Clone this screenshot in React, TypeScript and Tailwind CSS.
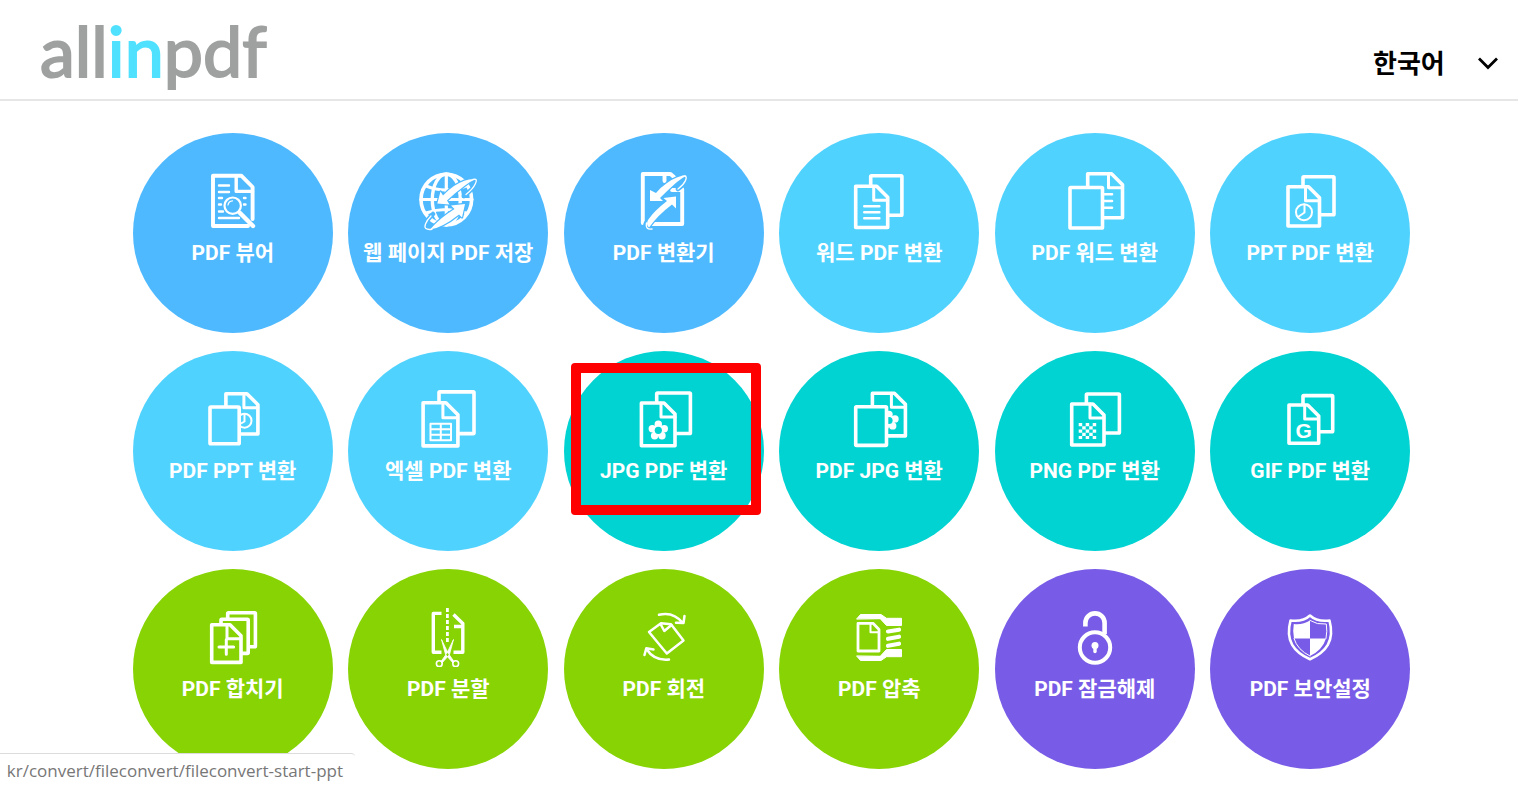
import type { ReactNode } from 'react';

type Box = { x: number; y: number; w: number; h: number };

// sheet of paper with a folded top right corner
function Sheet({ x, y, w, h, fold = 14, bg }: Box & { fold?: number; bg?: string }) {
  const r = x + w;
  const b = y + h;
  return (
    <>
      <path d={`M${r - fold + 3} ${y}H${x}V${b}H${r}V${y + fold - 3}Z`} className={bg} />
      <path d={`M${r - fold} ${y}V${y + fold}H${r}`} fill="none" strokeWidth="3" />
    </>
  );
}

function Page({ x, y, w, h, bg }: Box & { bg?: string }) {
  return <rect x={x} y={y} width={w} height={h} rx="0.8" className={bg} />;
}

function Flower({ x, y }: { x: number; y: number }) {
  return (
    <g stroke="none" fill="#fff">
      <path d={`M${x} ${y - 7}L${x + 6.8} ${y - 2}L${x + 4.2} ${y + 6}H${x - 4.2}L${x - 6.8} ${y - 2}Z`} />
      <circle cx={x} cy={y - 6} r="3.7" />
      <circle cx={x + 6} cy={y - 1.6} r="3.7" />
      <circle cx={x + 3.7} cy={y + 5.4} r="3.7" />
      <circle cx={x - 3.7} cy={y + 5.4} r="3.7" />
      <circle cx={x - 6} cy={y - 1.6} r="3.7" />
      <circle cx={x} cy={y} r="3.6" className="fill-[#00d3d2]" />
    </g>
  );
}

const blue = 'fill-[#4eb9ff]';
const sky = 'fill-[#50d2ff]';
const teal = 'fill-[#00d3d2]';
const green = 'fill-[#87d304]';

const tools: { label: string; color: string; icon: ReactNode; marked?: boolean }[] = [
  {
    label: 'PDF 뷰어',
    color: 'bg-[#4eb9ff]',
    icon: (
      <>
        <path d="M47 59H12V8.800H40.500L51.600 20V52" fill="none" strokeWidth="3.900" />
        <path d="M35.200 9V24.400H51.500" fill="none" strokeWidth="3.400" />
        <path d="M18 18.500h10M18 25h10M18 31h3M18 37.500h2M18 44.500h4M18 51h20M43 31h1.500M43 37.500h1.500" strokeWidth="2.400" fill="none" />
        <circle cx="31.700" cy="38.700" r="8.200" strokeWidth="2.200" className={blue} />
        <path d="M27 38a5 5 0 0 1 4.500-4.200" strokeWidth="1.200" fill="none" />
        <path d="M38.500 45.500L52 59" strokeWidth="4.400" fill="none" />
      </>
    ),
  },
  {
    label: '웹 페이지 PDF 저장',
    color: 'bg-[#4eb9ff]',
    icon: (
      <>
        <g fill="none">
          <circle cx="30.300" cy="32.500" r="25.300" strokeWidth="3.600" />
          <ellipse cx="30.300" cy="32.500" rx="14" ry="25.500" strokeWidth="3.400" />
          <path d="M30.300 7V58M5 32.500H56M10 19Q30 27 50 19M10 46Q30 39 50 46" strokeWidth="3.200" />
        </g>
        <path d="M60 12Q62 16 56 22Q53 25 48 29M16 62Q7 63.500 9.500 57Q11 53 17 47" fill="none" strokeWidth="4.500" className="stroke-[#4eb9ff]" />
        <g fill="#fff" className="stroke-[#4eb9ff]" strokeWidth="2.400" paintOrder="stroke">
          <path d="M60 12Q50 11 38 19Q32 23 27 28.500L24.500 24.500L21.300 36.500L33.500 37.500L31 33.500Q40 25 49 18.500Q55 14 60 12Z" />
          <path d="M14 62.500Q26 61 43 47.500L46 50.500L49 37L35 38.500L38.500 42Q24 51 14 62.500Z" />
        </g>
        <path d="M57 12.300Q62 11 59.500 16.500Q57 22 50 27.500M16 62.300Q7 63.500 9.500 57Q11 53 15 49" fill="none" strokeWidth="1.300" />
      </>
    ),
  },
  {
    label: 'PDF 변환기',
    color: 'bg-[#4eb9ff]',
    icon: (
      <>
        <path d="M10.800 56V7H38.500L42 10M50.200 22V57H20M32.500 8V14M40 23H50" fill="none" strokeWidth="3.900" />
        <path d="M54 9Q56 13 51 18L46 22M21 62Q11 63.500 14 56" fill="none" strokeWidth="4.500" className="stroke-[#4eb9ff]" />
        <g fill="#fff" className="stroke-[#4eb9ff]" strokeWidth="2.400" paintOrder="stroke">
          <path d="M54.500 8.500Q46 8 35 16Q29 20 24 26L18 23V34H31L28 31Q38 21 45 15Q50 11 54.500 8.500Z" />
          <path d="M17 60.500Q26 48 40 37.500L44 41.500V29.500L31.500 31L35 34Q22 44 16 53Q13.500 58 17 60.500Z" />
        </g>
        <path d="M50 9.300Q56 7.500 53.500 13.500Q51.500 18 46 22M20 62Q13 63 14.500 56" fill="none" strokeWidth="1.400" />
      </>
    ),
  },
  {
    label: '워드 PDF 변환',
    color: 'bg-[#50d2ff]',
    icon: (
      <>
        <Page x={23.700} y={8.700} w={31.200} h={39.500} />
        <Sheet x={8.700} y={19.200} w={32} h={41.300} bg={sky} />
        <path d="M17.300 39.200h15M17.300 45.200h15M17.300 51.200h15" strokeWidth="2.600" fill="none" />
      </>
    ),
  },
  {
    label: 'PDF 워드 변환',
    color: 'bg-[#50d2ff]',
    icon: (
      <>
        <Sheet x={24.700} y={6.700} w={34.800} h={44} bg={sky} />
        <path d="M41 27.300h8M41 34h8M41 40.800h8" strokeWidth="2.600" fill="none" />
        <Page x={7} y={20.500} w={32.500} h={40.500} bg={sky} />
      </>
    ),
  },
  {
    label: 'PPT PDF 변환',
    color: 'bg-[#50d2ff]',
    icon: (
      <>
        <Page x={25} y={9.700} w={31} h={38} />
        <Sheet x={10} y={19.700} w={31.500} h={39.300} bg={sky} />
        <circle cx="26" cy="45.200" r="8" strokeWidth="2" fill="none" />
        <path d="M26.500 37.500V45.500L20 50" strokeWidth="2" fill="none" />
      </>
    ),
  },
  {
    label: 'PDF PPT 변환',
    color: 'bg-[#50d2ff]',
    icon: (
      <>
        <Sheet x={24.900} y={8.700} w={32} h={40.300} bg={sky} />
        <circle cx="43.500" cy="35.700" r="7" strokeWidth="2" fill="none" />
        <path d="M43.500 29V36.500L39 39" strokeWidth="2" fill="none" />
        <Page x={9} y={22} w={29.200} h={36.700} bg={sky} />
      </>
    ),
  },
  {
    label: '엑셀 PDF 변환',
    color: 'bg-[#50d2ff]',
    icon: (
      <>
        <Page x={23} y={6.900} w={35} h={41.700} />
        <Sheet x={7.100} y={17.700} w={34.800} h={43.200} fold={15} bg={sky} />
        <path d="M14.500 38.800h20.500v16.500h-20.500zM14.500 44.300h20.500M14.500 49.800h20.500M24.800 38.800v16.500" strokeWidth="2" fill="none" />
      </>
    ),
  },
  {
    label: 'JPG PDF 변환',
    color: 'bg-[#00d3d2]',
    marked: true,
    icon: (
      <>
        <Page x={24.700} y={8} w={33.700} h={40.500} />
        <Sheet x={9.400} y={18} w={33.600} h={42.700} bg={teal} />
        <Flower x={26.300} y={45.300} />
      </>
    ),
  },
  {
    label: 'PDF JPG 변환',
    color: 'bg-[#00d3d2]',
    icon: (
      <>
        <Sheet x={25.400} y={8.200} w={33} h={42.700} bg={teal} />
        <Flower x={42} y={35.500} />
        <Page x={8.700} y={21.700} w={30.800} h={38.700} bg={teal} />
      </>
    ),
  },
  {
    label: 'PNG PDF 변환',
    color: 'bg-[#00d3d2]',
    icon: (
      <>
        <Page x={23.400} y={9} w={33} h={39} />
        <Sheet x={8.700} y={19} w={32.300} h={41} bg={teal} />
        <path
          d="M15.700 39.700H34M15.700 46.100H34M15.700 52.500H34M19.200 42.900H33M19.200 49.300H33"
          strokeWidth="3.200"
          strokeDasharray="3.500 3.500"
          strokeLinecap="butt"
          fill="none"
        />
      </>
    ),
  },
  {
    label: 'GIF PDF 변환',
    color: 'bg-[#00d3d2]',
    icon: (
      <>
        <Page x={25} y={10.600} w={29.700} h={36.200} />
        <Sheet x={11} y={20} w={29.700} h={38.200} bg={teal} />
        <text x="25.700" y="52.500" textAnchor="middle" stroke="none" fill="#fff" className="font-['Liberation_Sans',sans-serif] text-[21px] font-bold">G</text>
      </>
    ),
  },
  {
    label: 'PDF 합치기',
    color: 'bg-[#87d304]',
    icon: (
      <>
        <Page x={26.700} y={9.700} w={27.700} h={34} />
        <Page x={20} y={16.200} w={27.200} h={34.200} bg={green} />
        <Sheet x={10.700} y={21.700} w={29.300} h={37.700} bg={green} />
        <path d="M25.300 36.700v14.600M18 44h14.600" fill="none" strokeWidth="3" />
      </>
    ),
  },
  {
    label: 'PDF 분할',
    color: 'bg-[#87d304]',
    icon: (
      <g fill="none" strokeLinecap="butt">
        <path d="M25.500 10.400H17.300V49.300H25.500" strokeWidth="3.400" />
        <path d="M37.500 11.500L46.800 20.500V49.300H37.500M38 23.500H46.500" strokeWidth="3.400" />
        <path d="M31.400 5V41" strokeWidth="2.800" strokeDasharray="4 2" />
        <circle cx="23.300" cy="60.700" r="2.900" strokeWidth="1.600" />
        <circle cx="39.700" cy="60.700" r="2.900" strokeWidth="1.600" />
        <path d="M25.500 36.500L32 50L38 58.500L37 60L29.500 51.500ZM37.500 36.500L31 50L25 58.500L26 60L33.500 51.500Z" fill="#fff" strokeWidth=".8" />
      </g>
    ),
  },
  {
    label: 'PDF 회전',
    color: 'bg-[#87d304]',
    icon: (
      <g fill="none" strokeWidth="2.500">
        <path d="M17 29L29 20.300L39 21.300L51.500 37.500L34.800 50.500Z" />
        <path d="M28.500 21L32.300 28L39.500 22" />
        <path d="M27 11.800Q41 8 51 20M44 19.800L51.500 20L52.500 13" />
        <path d="M37 56.500Q22 58 14.500 46M12.500 52L14.300 45.200L21.500 46.500" />
      </g>
    ),
  },
  {
    label: 'PDF 압축',
    color: 'bg-[#87d304]',
    icon: (
      <>
        <g fill="#fff" strokeWidth="1">
          <path d="M9.800 15.800L13.500 11.500H34L39.500 15.300H54.500V22.500H39.500L33.500 16Z" />
          <path d="M9.800 53.200L13.500 57.500H34L39.500 53.700H54.500V46.500H39.500L33.500 53Z" />
        </g>
        <path d="M26 20.300H11V48H32V26.500Z" fill="none" strokeWidth="2.800" />
        <path d="M23.500 20.500V29.200H32" fill="none" strokeWidth="2" />
        <path d="M41 28.500L52 26.700M41 35.800L52 33.700M41 42.800L52 40.700" fill="none" strokeWidth="4.200" />
      </>
    ),
  },
  {
    label: 'PDF 잠금해제',
    color: 'bg-[#785be6]',
    icon: (
      <>
        <circle cx="32" cy="44.500" r="15.200" strokeWidth="4" fill="none" />
        <path d="M22.400 23.500V20A9.600 9.600 0 0 1 41.600 20V31" strokeWidth="4.600" strokeLinecap="butt" fill="none" />
        <circle cx="32" cy="42.500" r="3.500" fill="#fff" stroke="none" />
        <path d="M32 43V48.500" strokeWidth="3.400" fill="none" />
      </>
    ),
  },
  {
    label: 'PDF 보안설정',
    color: 'bg-[#785be6]',
    icon: (
      <>
        <path d="M32 12.500Q25 19 12.500 17.500C7 38 16 49 32 56.300C48 49 57 38 51.500 17.500Q39 19 32 12.500Z" strokeWidth="2.600" fill="none" />
        <path d="M32 17.500V35.500H16Q14.500 28 15.800 21Q25 22 32 17.500ZM32 35.500H48Q44.500 47 32 53Z" fill="#fff" stroke="none" />
        <path d="M32 17.500Q39 22 48.300 21Q49.500 28 48 35.500M16 35.500Q19.500 47 32 53" strokeWidth="1" fill="none" />
      </>
    ),
  },
];

export default function App() {
  return (
    <div className="min-h-screen bg-white font-[Roboto,'Noto_Sans_CJK_KR',sans-serif]">
      <header className="flex h-[101px] items-center justify-between border-b-2 border-[#e6e6e6] pl-10 pr-5">
        <a href="#" className="font-[Lato,sans-serif] text-[70px] leading-[72px] text-[#9fa1a0] [-webkit-text-stroke:2px] [stroke-linejoin:round]">
          all<span className="text-[#50e1ff]">in</span>pdf
        </a>
        <div className="relative mt-6 flex items-center">
          <select
            aria-label="언어"
            className="w-[125px] appearance-none bg-transparent font-['Noto_Sans_CJK_KR',sans-serif] text-[26px] font-bold leading-9 text-black"
          >
            <option>한국어</option>
          </select>
          <svg viewBox="0 0 20 14" className="pointer-events-none absolute right-0 top-3 h-[14px] w-5" fill="none" stroke="#000" strokeWidth="2.800">
            <path d="M1 2.500L10 11.500L19 2.500" />
          </svg>
        </div>
      </header>

      <main className="grid grid-cols-6 justify-items-center gap-y-[18px] pb-[18px] pl-[125px] pr-[100px] pt-8">
        {tools.map((tool) => (
          <a
            key={tool.label}
            href="#"
            className={`${tool.color} relative flex size-[200px] flex-col items-center rounded-full pt-[34px] text-white`}
          >
            <svg viewBox="0 0 64 64" className="size-16" fill="none" stroke="#fff" strokeWidth="3.600" strokeLinejoin="round" strokeLinecap="round">
              {tool.icon}
            </svg>
            <span className="mt-2 whitespace-nowrap text-[21px] font-bold leading-7">{tool.label}</span>
            {tool.marked && (
              <span className="pointer-events-none absolute left-[7px] top-3 h-[152px] w-[190px] rounded-[4px] border-[10px] border-[#ff0000]" />
            )}
          </a>
        ))}
      </main>

      <div className="fixed bottom-0 left-0 flex h-[34px] w-[355px] items-center justify-end overflow-hidden rounded-tr border-t border-[#dcdcdc] bg-white pr-3 font-['Open_Sans',sans-serif] text-[17px] leading-6 text-[#777]">
        <span className="whitespace-nowrap">kr/convert/fileconvert/fileconvert-start-ppt</span>
      </div>
    </div>
  );
}
